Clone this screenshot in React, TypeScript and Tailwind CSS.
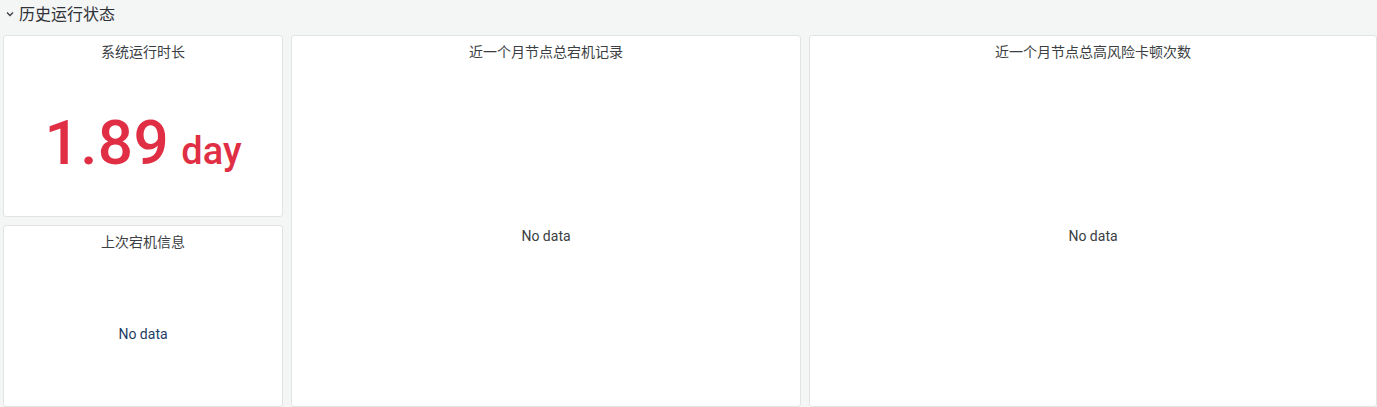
import type { ReactNode } from 'react';

interface PanelProps {
  title: string;
  children: ReactNode;
}

function Panel({ title, children }: PanelProps) {
  return (
    <div className="flex flex-col min-h-0 bg-white border border-[#e2e3e4] rounded-[3px] overflow-hidden">
      <div className="h-[31px] shrink-0 flex items-center justify-center text-[14px] leading-none text-[#3b3e42] font-['Roboto','Noto_Sans_CJK_SC',sans-serif] pt-[1px]">
        {title}
      </div>
      <div className="flex-1 flex items-center justify-center">{children}</div>
    </div>
  );
}

function NoData({ tone = 'gray' }: { tone?: 'gray' | 'blue' }) {
  return (
    <span
      className={`text-[14px] font-['Roboto',sans-serif] ${
        tone === 'blue' ? 'text-[#1d3c63]' : 'text-[#3a3d42]'
      }`}
    >
      No data
    </span>
  );
}

export default function App() {
  return (
    <div className="w-[1377px] h-[407px] bg-[#f4f5f5] overflow-hidden font-['Roboto','Noto_Sans_CJK_SC',sans-serif]">
      <div className="h-[26px] flex items-center pl-[6px] gap-[5px] text-[#2f3236]">
        <svg width="8" height="6" viewBox="0 0 8 6" className="mt-[1px]">
          <path d="M1 1.5 L4 4.5 L7 1.5" fill="none" stroke="#3a3d42" strokeWidth="1.3" />
        </svg>
        <span className="text-[16px] leading-none font-['Noto_Sans_CJK_SC',sans-serif]">历史运行状态</span>
      </div>

      <div className="mt-[9px] ml-[3px] grid grid-cols-[280px_510px_568px] gap-[8px] h-[372px]">
        <div className="grid grid-rows-[182px_182px] gap-[8px] min-h-0">
          <Panel title="系统运行时长">
            <div className="flex items-baseline text-[#e02f44] font-['Roboto',sans-serif] font-medium pt-[2px]">
              <span className="text-[62px] leading-none tracking-[0.5px]">1.89</span>
              <span className="text-[38px] leading-none ml-[12px]">day</span>
            </div>
          </Panel>
          <Panel title="上次宕机信息">
            <div className="pt-[4px]">
              <NoData tone="blue" />
            </div>
          </Panel>
        </div>
        <Panel title="近一个月节点总宕机记录">
          <NoData />
        </Panel>
        <Panel title="近一个月节点总高风险卡顿次数">
          <NoData />
        </Panel>
      </div>
    </div>
  );
}
